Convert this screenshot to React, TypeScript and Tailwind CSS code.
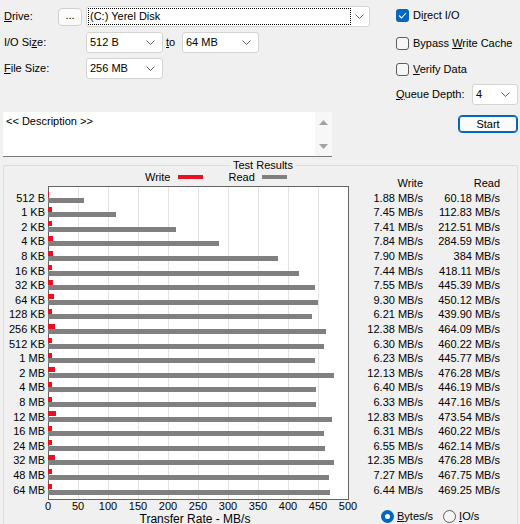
import React from "react";

// ATTO-style benchmark window
const results: [string, string, string][] = [
  ["512 B", "1.88", "60.18"],
  ["1 KB", "7.45", "112.83"],
  ["2 KB", "7.41", "212.51"],
  ["4 KB", "7.84", "284.59"],
  ["8 KB", "7.90", "384"],
  ["16 KB", "7.44", "418.11"],
  ["32 KB", "7.55", "445.39"],
  ["64 KB", "9.30", "450.12"],
  ["128 KB", "6.21", "439.90"],
  ["256 KB", "12.38", "464.09"],
  ["512 KB", "6.30", "460.22"],
  ["1 MB", "6.23", "445.77"],
  ["2 MB", "12.13", "476.28"],
  ["4 MB", "6.40", "446.19"],
  ["8 MB", "6.33", "447.16"],
  ["12 MB", "12.83", "473.54"],
  ["16 MB", "6.31", "460.22"],
  ["24 MB", "6.55", "462.14"],
  ["32 MB", "12.35", "476.28"],
  ["48 MB", "7.27", "467.75"],
  ["64 MB", "6.44", "469.25"],
];

const ticks = [0, 50, 100, 150, 200, 250, 300, 350, 400, 450, 500];

function Chevron() {
  return (
    <svg width="9" height="5" viewBox="0 0 9 5" className="shrink-0">
      <path d="M0.5 0.5 L4.5 4.5 L8.5 0.5" fill="none" stroke="#606060" strokeWidth="1" />
    </svg>
  );
}

function Combo({ value, className }: { value: string; className: string }) {
  return (
    <div
      className={`flex h-[21px] items-center justify-between rounded-[3px] border border-[#d4d4d4] bg-white pl-[3px] pr-[7px] ${className}`}
    >
      <span>{value}</span>
      <Chevron />
    </div>
  );
}

function Check({ checked, children }: { checked?: boolean; children: React.ReactNode }) {
  return (
    <div className="flex h-[13px] items-center">
      {checked ? (
        <div className="flex h-[13px] w-[13px] items-center justify-center rounded-[3px] bg-[#0067c0]">
          <svg width="9" height="7" viewBox="0 0 9 7">
            <path d="M1 3.5 L3.5 6 L8 1" fill="none" stroke="white" strokeWidth="1.1" />
          </svg>
        </div>
      ) : (
        <div className="h-[13px] w-[13px] rounded-[3px] border border-[#5d5d5d] bg-[#f6f6f6]" />
      )}
      <span className="ml-[4px]">{children}</span>
    </div>
  );
}

export default function App() {
  return (
    <div className="h-[524px] w-[520px] overflow-hidden bg-[#f0f0f0] font-['Liberation_Sans',Arial,sans-serif] text-[11px] leading-[13px] text-black">
      <div className="flex">
        {/* left settings */}
        <div className="w-[396px] pt-[6px]">
          <div className="flex h-[21px] items-center">
            <span className="ml-[4px] w-[54px]">
              <span className="underline">D</span>rive:
            </span>
            <div className="flex h-[18px] w-[24px] items-center justify-center rounded-[4px] border border-[#d0d0d0] bg-[#fbfbfb] pb-[2px]">
              ...
            </div>
            <div className="ml-[4px] flex h-[21px] w-[284px] items-center justify-between rounded-[3px] border border-[#d4d4d4] bg-white pl-[1px] pr-[5px]">
              <div className="flex h-[17px] w-[263px] items-center border border-dotted border-black pl-[1px]">
                (C:) Yerel Disk
              </div>
              <Chevron />
            </div>
          </div>

          <div className="mt-[5px] flex h-[21px] items-center">
            <span className="ml-[4px] w-[82px]">
              I/O Si<span className="underline">z</span>e:
            </span>
            <Combo value="512 B" className="w-[77px]" />
            <span className="ml-[3px] w-[16px]">
              <span className="underline">t</span>o
            </span>
            <Combo value="64 MB" className="w-[77px]" />
          </div>

          <div className="mt-[5px] flex h-[21px] items-center">
            <span className="ml-[4px] w-[82px]">
              <span className="underline">F</span>ile Size:
            </span>
            <Combo value="256 MB" className="w-[77px]" />
          </div>

          <div className="ml-[3px] mt-[33px] flex h-[45px] w-[329px] border-b border-[#7a7a7a] bg-white">
            <div className="flex-1 pl-[3px] pt-[3px]">&lt;&lt; Description &gt;&gt;</div>
            <div className="flex w-[17px] flex-col items-center justify-between bg-[#f7f7f7] pb-[7px] pt-[8px]">
              <svg width="9" height="5" viewBox="0 0 9 5">
                <path d="M0 5 L4.5 0 L9 5 Z" fill="#a3a3a3" />
              </svg>
              <svg width="9" height="5" viewBox="0 0 9 5">
                <path d="M0 0 L4.5 5 L9 0 Z" fill="#a3a3a3" />
              </svg>
            </div>
          </div>
        </div>

        {/* right options */}
        <div className="w-[124px] pt-[9px]">
          <Check checked>
            Di<span className="underline">r</span>ect I/O
          </Check>
          <div className="mt-[15px]">
            <Check>
              Bypass <span className="underline">W</span>rite Cache
            </Check>
          </div>
          <div className="mt-[13px]">
            <Check>
              <span className="underline">V</span>erify Data
            </Check>
          </div>
          <div className="mt-[8px] flex h-[21px] items-center">
            <span className="w-[76px]">
              <span className="underline">Q</span>ueue Depth:
            </span>
            <Combo value="4" className="w-[46px]" />
          </div>
          <div className="ml-[62px] mt-[10px] flex h-[18px] w-[60px] items-center justify-center rounded-[4px] border border-[#0067c0] bg-[#fbfbfb] shadow-[inset_0_0_0_1px_#0067c0]">
            Start
          </div>
        </div>
      </div>

      {/* results group */}
      <div className="relative mx-[3px] mt-[8px] h-[400px] w-[515px] rounded-[2px] border border-[#dcdcdc]">
        <div className="absolute -top-[7px] left-[227px] bg-[#f0f0f0] px-[2px]">Test Results</div>

        <div className="flex pt-[4px]">
          {/* size labels */}
          <div className="w-[41px] pt-[20.7px] text-right">
            {results.map(([size]) => (
              <div key={size} className="h-[14.6px] leading-[14.6px]">
                {size}
              </div>
            ))}
          </div>

          {/* chart */}
          <div className="ml-[3px] w-[301px]">
            <div className="flex h-[16px] items-start pl-[97px]">
              <div className="flex h-[14px] items-center">
                <span>Write</span>
                <span className="ml-[8px] h-[4px] w-[25px] bg-[#e81123]" />
                <span className="ml-[25px]">Read</span>
                <span className="ml-[7px] h-[4px] w-[25px] bg-[#808080]" />
              </div>
            </div>

            <div className="relative h-[314px] w-[301px] border border-[#646464] bg-white">
              <svg className="absolute inset-0" width="299" height="312">
                {[1, 2, 3, 4, 5, 6, 7, 8, 9].map((k) => (
                  <rect key={k} x={29 + 30 * (k - 1)} y="0" width="1" height="312" fill="#e3e3e3" />
                ))}
              </svg>
              <div className="relative -ml-px pt-[3.7px]">
                {results.map(([size, w, r]) => (
                  <div key={size} className="h-[14.6px] pt-[1.5px]">
                    <div className="h-[5px] bg-[#e81123]" style={{ width: parseFloat(w) * 0.6 }} />
                    <div className="mt-[0.5px] h-[5px] bg-[#808080]" style={{ width: parseFloat(r) * 0.6 }} />
                  </div>
                ))}
              </div>
            </div>

            <div className="-ml-[15px] flex h-[13px] w-[330px]">
              {ticks.map((t) => (
                <div key={t} className="w-[30px] text-center">
                  {t}
                </div>
              ))}
            </div>
            <div className="h-[13px] pr-[7px] text-center text-[12px] leading-[13px]">Transfer Rate - MB/s</div>
          </div>

          {/* values */}
          <div className="pt-[6.1px]">
            <div className="flex">
              <div className="w-[74px] text-right">
                <div className="h-[14.6px] leading-[14.6px]">Write</div>
                {results.map(([size, w]) => (
                  <div key={size} className="h-[14.6px] leading-[14.6px]">
                    {w} MB/s
                  </div>
                ))}
              </div>
              <div className="w-[77px] text-right">
                <div className="h-[14.6px] leading-[14.6px]">Read</div>
                {results.map(([size, , r]) => (
                  <div key={size} className="h-[14.6px] leading-[14.6px]">
                    {r} MB/s
                  </div>
                ))}
              </div>
            </div>

            <div className="ml-[32px] mt-[13.2px] flex h-[13px] items-center">
              <div className="flex h-[13px] w-[13px] items-center justify-center rounded-full bg-[#0067c0]">
                <div className="h-[5px] w-[5px] rounded-full bg-white" />
              </div>
              <span className="ml-[3px]">
                <span className="underline">B</span>ytes/s
              </span>
              <div className="ml-[10px] h-[13px] w-[13px] rounded-full border border-[#5d5d5d] bg-[#f6f6f6]" />
              <span className="ml-[3px]">
                <span className="underline">I</span>O/s
              </span>
            </div>
          </div>
        </div>
      </div>
    </div>
  );
}
